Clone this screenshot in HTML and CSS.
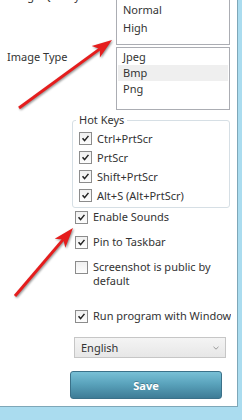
FILE: index.html
```html
<!DOCTYPE html>
<html>
<head>
<meta charset="utf-8">
<link rel="stylesheet" href="styles.css">
</head>
<body>
<div class="panel">
  <div class="row row-quality">
    <span class="label">Image Quality</span>
    <div class="listbox">
      <div class="item">Low</div>
      <div class="item">Normal</div>
      <div class="item">High</div>
    </div>
  </div>
  <div class="row row-type">
    <span class="label">Image Type</span>
    <div class="listbox">
      <div class="item">Jpeg</div>
      <div class="item selected">Bmp</div>
      <div class="item">Png</div>
    </div>
  </div>
  <fieldset class="group">
    <legend>Hot Keys</legend>
    <div class="check"><span class="cb"><svg viewBox="0 0 13 13"><path d="M3 6.3 L5.4 9 L10 3.4"/></svg></span><span>Ctrl+PrtScr</span></div>
    <div class="check"><span class="cb"><svg viewBox="0 0 13 13"><path d="M3 6.3 L5.4 9 L10 3.4"/></svg></span><span>PrtScr</span></div>
    <div class="check"><span class="cb"><svg viewBox="0 0 13 13"><path d="M3 6.3 L5.4 9 L10 3.4"/></svg></span><span>Shift+PrtScr</span></div>
    <div class="check"><span class="cb"><svg viewBox="0 0 13 13"><path d="M3 6.3 L5.4 9 L10 3.4"/></svg></span><span>Alt+S (Alt+PrtScr)</span></div>
  </fieldset>
  <div class="opts">
    <div class="opt"><span class="cb"><svg viewBox="0 0 13 13"><path d="M3 6.3 L5.4 9 L10 3.4"/></svg></span><span class="opt-text">Enable Sounds</span></div>
    <div class="opt"><span class="cb"><svg viewBox="0 0 13 13"><path d="M3 6.3 L5.4 9 L10 3.4"/></svg></span><span class="opt-text">Pin to Taskbar</span></div>
    <div class="opt"><span class="cb"></span><span class="opt-text">Screenshot is public by default</span></div>
  </div>
  <div class="opt run"><span class="cb"><svg viewBox="0 0 13 13"><path d="M3 6.3 L5.4 9 L10 3.4"/></svg></span><span class="opt-text">Run program with Windows</span></div>
  <div class="select"><span>English</span><svg class="chev" viewBox="0 0 6 4"><path d="M0.5 0.8 L3 3.2 L5.5 0.8"/></svg></div>
  <button class="save">Save</button>
</div>
<svg class="arrows" viewBox="0 0 242 420">
  <g class="arrow">
    <line x1="19" y1="108" x2="99.9" y2="48.9"/>
    <polygon points="112,40 99.9,57.5 99.9,48.9 91.7,46.1"/>
  </g>
  <g class="arrow">
    <line x1="15" y1="296" x2="63.3" y2="239.4"/>
    <polygon points="73,228 65.3,247.7 63.3,239.4 54.7,238.7"/>
  </g>
</svg>
</body>
</html>
```
FILE: styles.css
```css
body {
  margin: 0;
  width: 242px;
  height: 420px;
  overflow: hidden;
  position: relative;
  background: #aadcef;
  font-family: "Noto Sans", "Open Sans", sans-serif;
  font-size: 11px;
  color: #333;
}

.panel {
  width: 238px;
  height: 407px;
  box-sizing: border-box;
  background: #fff;
  border-right: 1px solid #7ea7b8;
  border-bottom: 1px solid #7ea7b8;
  overflow: hidden;
}

.row {
  display: grid;
  grid-template-columns: 109px 114px;
  padding-left: 7px;
}

.row-quality { margin-top: -19px; }
.row-type { margin-top: 2px; }

.label {
  line-height: 16px;
  padding-top: 2px;
}

.row-quality .label {
  line-height: 18px;
  padding-top: 6px;
}

.listbox {
  height: 63px;
  box-sizing: border-box;
  border: 1px solid #abadb3;
  padding: 1px;
}

.row-quality .listbox { height: 64px; }

.item {
  line-height: 16px;
  padding-left: 5px;
}

.row-quality .item { line-height: 18px; }

.item.selected { background: #efefef; }

.group {
  margin: 2px 7px 0 72px;
  padding: 1px 0 2px 3px;
  border: 1px solid #d6dfe5;
  border-radius: 3px;
}

.group legend {
  padding: 0 3px;
  line-height: 16px;
}

.check {
  display: flex;
  align-items: center;
  gap: 5px;
  height: 19px;
  margin-left: 3px;
}

.cb {
  width: 13px;
  height: 13px;
  flex: none;
  box-sizing: border-box;
  border: 1px solid #8c8c8c;
  background: linear-gradient(#f0f0f0, #fdfdfd);
}

.cb svg {
  display: block;
  width: 11px;
  height: 11px;
  margin: 0;
}

.cb svg path {
  fill: none;
  stroke: #222;
  stroke-width: 1.8;
}

.opts {
  margin: 2px 0 0 75px;
  width: 154px;
  display: flex;
  flex-direction: column;
  gap: 11px;
}

.opt {
  display: flex;
  align-items: flex-start;
  gap: 5px;
  line-height: 14px;
}

.opt .cb { margin-top: 0.5px; }

.run {
  margin: 21px 0 0 75px;
  width: 156px;
  overflow: hidden;
  white-space: nowrap;
}

.select {
  margin: 14px 0 0 74px;
  width: 152px;
  height: 21px;
  box-sizing: border-box;
  border: 1px solid #c6c6c6;
  background: linear-gradient(#f4f4f4, #e7e7e7);
  display: flex;
  align-items: center;
  justify-content: space-between;
  padding: 0 6px 0 6px;
}

.chev {
  width: 6px;
  height: 4px;
}

.chev path {
  fill: none;
  stroke: #999;
  stroke-width: 1;
}

.save {
  display: block;
  margin: 13px 0 0 70px;
  width: 152px;
  height: 28px;
  box-sizing: border-box;
  border: 1px solid #3b7189;
  border-radius: 3px;
  background: linear-gradient(#78c0d6, #5aa3bc 45%, #3e7c96);
  color: #fff;
  font-family: "Noto Sans", "Open Sans", sans-serif;
  font-size: 11px;
  font-weight: bold;
  text-shadow: 0 -1px 0 rgba(0, 0, 0, 0.25);
  padding: 0;
}

.arrows {
  position: absolute;
  left: 0;
  top: 0;
  width: 242px;
  height: 420px;
  pointer-events: none;
}

.arrow {
  filter: drop-shadow(1px 1px 1px rgba(0, 0, 0, 0.45));
}

.arrow line {
  stroke: #e51d1d;
  stroke-width: 3;
}

.arrow polygon {
  fill: #e51d1d;
}
```
